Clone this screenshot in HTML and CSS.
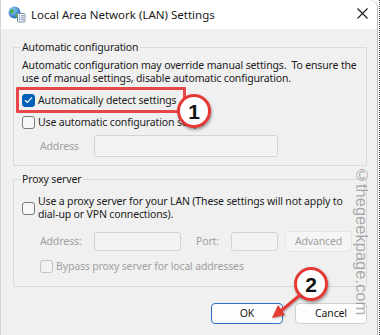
FILE: index.html
```html
<!DOCTYPE html>
<html>
<head>
<meta charset="utf-8">
<link rel="stylesheet" href="styles.css">
</head>
<body>
<div class="screen">
  <div class="window">
    <div class="titlebar">
      <svg class="app-icon" width="18" height="17" viewBox="0 0 18 17">
        <defs>
          <radialGradient id="gl" cx="0.35" cy="0.3" r="0.8">
            <stop offset="0" stop-color="#8fd0ff"/>
            <stop offset="1" stop-color="#1d5fb0"/>
          </radialGradient>
        </defs>
        <circle cx="6.5" cy="6.5" r="6" fill="url(#gl)"/>
        <path d="M2 4.5 Q4 2.5 6 3.5 Q7 5 5 6 Q4 8 3 7.5 Q1.8 6 2 4.5Z" fill="#4caf3c"/>
        <path d="M7.5 8 Q9.5 7 10.5 9 Q10 11.5 8 11.8 Q7 10 7.5 8Z" fill="#4caf3c"/>
        <rect x="9.5" y="7.5" width="7.5" height="8.5" rx="0.8" fill="#fff" stroke="#6d7f96" stroke-width="0.9"/>
        <rect x="11" y="9.3" width="1.2" height="1" fill="#2b73c9"/>
        <rect x="13" y="9.3" width="3" height="1" fill="#7b8ea5"/>
        <rect x="11" y="11.3" width="1.2" height="1" fill="#2b73c9"/>
        <rect x="13" y="11.3" width="3" height="1" fill="#7b8ea5"/>
        <rect x="11" y="13.3" width="1.2" height="1" fill="#2b73c9"/>
        <rect x="13" y="13.3" width="3" height="1" fill="#7b8ea5"/>
      </svg>
      <span class="title">Local Area Network (LAN) Settings</span>
      <svg class="close" width="11" height="11" viewBox="0 0 11 11">
        <path d="M0.5 0.5 L10.5 10.5 M10.5 0.5 L0.5 10.5" stroke="#1a1a1a" stroke-width="1.1"/>
      </svg>
    </div>

    <div class="content">
      <div class="group group-auto">
        <span class="legend">Automatic configuration</span>
        <p class="desc">Automatic configuration may override manual settings.&nbsp; To ensure the<br>use of manual settings, disable automatic configuration.</p>
        <label class="check-row row-first">
          <span class="box checked">
            <svg width="9" height="8" viewBox="0 0 9 8"><path d="M1 4.2 L3.4 6.5 L8 1.3" fill="none" stroke="#fff" stroke-width="1.2"/></svg>
          </span>
          <span>Automatically detect settings</span>
        </label>
        <label class="check-row">
          <span class="box"></span>
          <span>Use automatic configuration script</span>
        </label>
        <div class="field-row">
          <span class="muted label-addr">Address</span>
          <span class="input input-script"></span>
        </div>
      </div>

      <div class="group group-proxy">
        <span class="legend">Proxy server</span>
        <label class="check-row proxy-row">
          <span class="box"></span>
          <span>Use a proxy server for your LAN (These settings will not apply to<br>dial-up or VPN connections).</span>
        </label>
        <div class="field-row proxy-fields">
          <span class="muted label-addr2">Address:</span>
          <span class="input input-addr"></span>
          <span class="muted label-port">Port:</span>
          <span class="input input-port"></span>
          <span class="btn btn-disabled">Advanced</span>
        </div>
        <label class="check-row bypass-row">
          <span class="box disabled"></span>
          <span class="muted">Bypass proxy server for local addresses</span>
        </label>
      </div>

      <div class="actions">
        <span class="btn btn-default">OK</span>
        <span class="btn">Cancel</span>
      </div>
    </div>

    <div class="highlight"></div>
    <div class="marker marker-1">1</div>
    <div class="marker marker-2">2</div>
    <svg class="arrow" width="380" height="335" viewBox="0 0 380 335">
      <path d="M299 295 L281 310" stroke="#e53935" stroke-width="3" stroke-linecap="round"/>
      <polygon points="271,318 284,315 277,305" fill="#e53935"/>
    </svg>
    <span class="watermark">©thegeekpage.com</span>
  </div>
</div>
</body>
</html>
```

FILE: styles.css
```css
* { box-sizing: border-box; }

html, body {
  margin: 0;
  padding: 0;
  background: #ffffff;
}

.screen {
  width: 380px;
  height: 335px;
  display: flex;
  border-right: 1px dotted #444;
  overflow: hidden;
}

.window {
  position: relative;
  width: 378px;
  height: 335px;
  background: #f0f0f0;
  border-left: 1px solid #d4d4d4;
  border-right: 1px solid #b9b9b9;
  border-top-right-radius: 8px;
  font-family: "Noto Sans", "Open Sans", sans-serif;
  font-size: 10.5px;
  letter-spacing: -0.15px;
  line-height: 13px;
  color: #1b1b1b;
  white-space: nowrap;
}

.titlebar {
  height: 29px;
  background: #ffffff;
  display: flex;
  align-items: center;
  padding-left: 7px;
  border-top-right-radius: 8px;
}

.app-icon { flex: none; margin-top: -1px; }

.title {
  margin-left: 5px;
  font-size: 11.5px;
  letter-spacing: 0;
  color: #1a1a1a;
}

.close { margin-left: auto; margin-right: 9px; margin-top: -2px; }

.content {
  padding: 18px 10px 0 12px;
}

.group {
  position: relative;
  border: 1px solid #dadada;
  border-radius: 1px;
}

.legend {
  position: absolute;
  top: -7px;
  left: 6px;
  padding: 0 2px;
  background: #f0f0f0;
  line-height: 13px;
}

.group-auto {
  padding: 11px 8px 8px 8px;
}

.desc {
  margin: 0;
}

.check-row {
  display: flex;
  align-items: center;
  height: 18px;
  margin-top: 4px;
}

.row-first { margin-top: 6px; }

.box {
  flex: none;
  width: 13px;
  height: 13px;
  border: 1px solid #7a7a7a;
  border-radius: 3px;
  background: #f7f7f7;
  margin-right: 3px;
  display: flex;
  align-items: center;
  justify-content: center;
}

.box.checked {
  background: #005fb8;
  border-color: #005fb8;
}

.box.disabled {
  border-color: #c4c4c4;
  background: #f3f3f3;
}

.muted { color: #a0a0a0; }

.field-row {
  display: flex;
  align-items: center;
  margin-top: 4px;
  padding-left: 18px;
}

.label-addr { width: 54px; }

.input {
  display: block;
  border: 1px solid #d3d3d3;
  border-radius: 3px;
  background: #f3f3f3;
}

.input-script { width: 184px; height: 22px; }

.group-proxy {
  margin-top: 13px;
  padding: 15px 8px 11px 8px;
}

.proxy-row {
  height: 26px;
  margin-top: 0;
}

.proxy-fields { margin-top: 10px; }

.label-addr2 { width: 54px; }
.input-addr { width: 87px; height: 19px; }
.label-port { margin-left: 15px; width: 35px; }
.input-port { width: 47px; height: 19px; }

.btn {
  display: flex;
  align-items: center;
  justify-content: center;
  height: 21px;
  width: 72px;
  border: 1px solid #d0d0d0;
  border-radius: 4px;
  background: #fdfdfd;
  color: #1b1b1b;
}

.btn-disabled {
  margin-left: 7px;
  width: 67px;
  background: #f5f5f5;
  border-color: #e3e3e3;
  color: #a0a0a0;
}

.bypass-row {
  margin-top: 6px;
  height: 17px;
  padding-left: 18px;
}

.actions {
  display: flex;
  justify-content: flex-end;
  gap: 12px;
  margin-top: 16px;
  padding-right: 0;
}

.btn-default {
  border-color: #2d6fc2;
}

.highlight {
  position: absolute;
  left: 15px;
  top: 87px;
  width: 170px;
  height: 26px;
  border: 3px solid #e8474a;
  border-radius: 1px;
}

.marker {
  position: absolute;
  width: 34px;
  height: 34px;
  border-radius: 50%;
  background: #ffffff;
  border: 3px solid #e53935;
  box-shadow: 1px 2px 3px rgba(0,0,0,0.35);
  display: flex;
  align-items: center;
  justify-content: center;
  font-family: "Liberation Sans", Arial, sans-serif;
  font-weight: bold;
  font-size: 21px;
  letter-spacing: 0;
  color: #111;
}

.marker-1 { left: 176px; top: 94px; }
.marker-2 { left: 293px; top: 267px; }

.arrow {
  position: absolute;
  left: 0;
  top: 0;
  filter: drop-shadow(1px 1px 1px rgba(0,0,0,0.3));
}

.watermark {
  position: absolute;
  left: 352px;
  top: 166px;
  writing-mode: vertical-rl;
  font-family: "Liberation Sans", Arial, sans-serif;
  font-size: 16.5px;
  letter-spacing: 0;
  line-height: 18px;
  color: rgba(120,120,120,0.6);
}
```
